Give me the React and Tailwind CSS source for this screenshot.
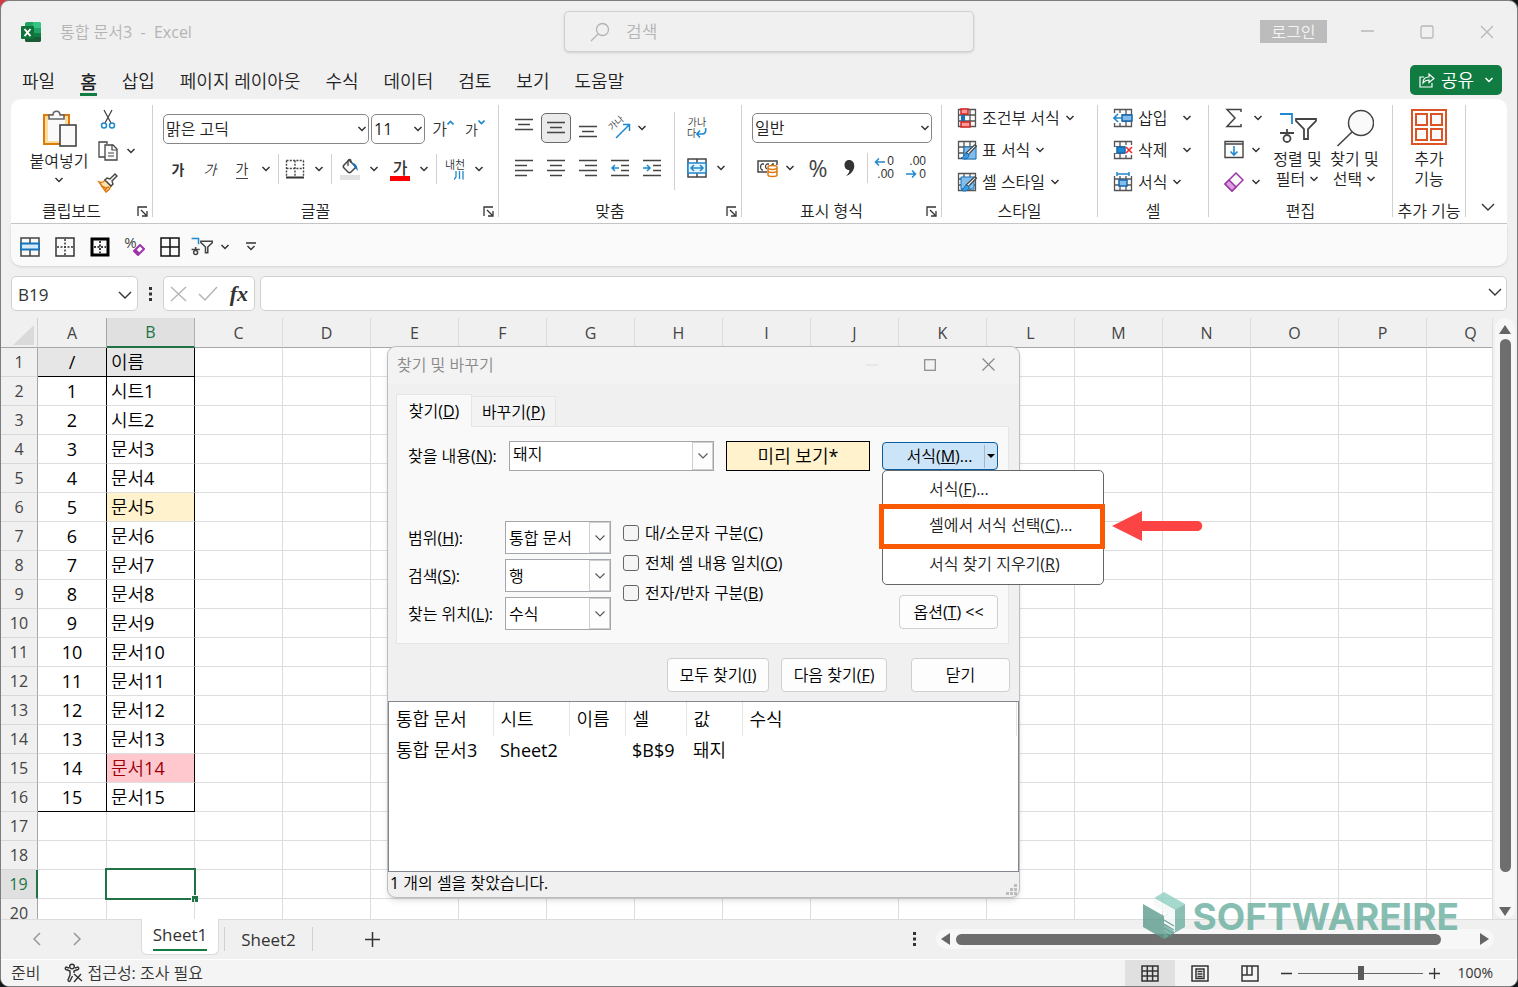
import React from 'react';

const COLS = ['C', 'D', 'E', 'F', 'G', 'H', 'I', 'J', 'K', 'L', 'M', 'N', 'O', 'P', 'Q'];

const NAMES = [
  '이름', '시트1', '시트2', '문서3', '문서4', '문서5', '문서6', '문서7', '문서8',
  '문서9', '문서10', '문서11', '문서12', '문서13', '문서14', '문서15',
];

const MENU_TABS = ['파일', '홈', '삽입', '페이지 레이아웃', '수식', '데이터', '검토', '보기', '도움말'];

/* ---------- 공통 ---------- */

function Svg({ w = 20, h = 20, className = '', children }) {
  return (
    <svg width={w} height={h} viewBox={`0 0 ${w} ${h}`} fill="none" className={`shrink-0 ${className}`} aria-hidden="true">
      {children}
    </svg>
  );
}

function Chevron({ className = 'text-[#333]' }) {
  return (
    <Svg w={10} h={6} className={className}>
      <path d="M1.5 1 5 4.5 8.5 1" stroke="currentColor" strokeWidth="1.5" />
    </Svg>
  );
}

function WideChevron({ className = 'text-[#333]' }) {
  return (
    <Svg w={14} h={8} className={className}>
      <path d="M1 1 7 7 13 1" stroke="currentColor" strokeWidth="1.4" />
    </Svg>
  );
}

function IconButton({ label, className = 'w-8', children }) {
  return (
    <button type="button" aria-label={label} className={`flex h-8 shrink-0 items-center justify-center ${className}`}>
      {children}
    </button>
  );
}

function Divider({ className = 'h-[30px]' }) {
  return <div className={`w-px shrink-0 bg-[#d0d0d0] ${className}`} />;
}

function Group({ title, launcher, className, children }) {
  return (
    <section className={`flex shrink-0 py-[6px] ${className}`}>
      <div className="flex min-w-0 flex-1 flex-col">
        <div className="h-[100px]">{children}</div>
        <div className={`relative flex h-3 items-center justify-center text-[16px] leading-3 whitespace-nowrap ${launcher ? 'pr-5' : ''}`}>
          {title}
          {launcher && (
            <button type="button" aria-label={`${title} 설정`} className="absolute right-1 bottom-0">
              <Svg w={11} h={11}>
                <path d="M1 10V1h9M4 4l5 5M10 5v5H5" stroke="#333" strokeWidth="1.3" />
              </Svg>
            </button>
          )}
        </div>
      </div>
      <Divider className="h-full" />
    </section>
  );
}

function RibbonSelect({ label, value, className }) {
  return (
    <div className={`relative ${className}`}>
      <select aria-label={label} className="h-[30px] w-full appearance-none rounded-[5px] border border-[#868686] bg-white pl-[2px] text-[16px] leading-none text-[#222]">
        <option>{value}</option>
      </select>
      <span className="pointer-events-none absolute top-3 right-[2px]">
        <Chevron />
      </span>
    </div>
  );
}

/* ---------- 아이콘 ---------- */

function ExcelLogo() {
  return (
    <Svg w={22} h={22}>
      <path d="M7 1h7v6H5V2z" fill="#21a366" />
      <path d="M13 1h7l1 1v5h-8z" fill="#33c481" />
      <path d="M5 7h8v5H5z" fill="#107c41" />
      <path d="M13 7h8v5h-8z" fill="#21a366" />
      <path d="M5 12h16v8l-1 1H6l-1-1z" fill="#185c37" />
      <path d="M13 12h8v4h-8z" fill="#107c41" />
      <rect x="1" y="5" width="13" height="13" rx="1" fill="#0f7238" />
      <path d="m4.500 8 6 7.200M10.500 8l-6 7.200" stroke="#fff" strokeWidth="1.9" />
    </Svg>
  );
}

function PasteIcon() {
  return (
    <Svg w={36} h={38}>
      <rect x="3" y="6" width="25" height="29" fill="#fadf9a" stroke="#e07a10" strokeWidth="2" />
      <rect x="7" y="9" width="17" height="23" fill="#fafafa" />
      <path d="M8 10V6h4c0-5 7-5 7 0h4v4z" fill="#fafafa" stroke="#666" strokeWidth="1.600" />
      <rect x="19" y="16" width="16" height="21" fill="#fafafa" stroke="#444" strokeWidth="1.600" />
    </Svg>
  );
}

function CutIcon() {
  return (
    <Svg>
      <path d="M6 1l7 13M14 1 7 14" stroke="#444" strokeWidth="1.300" />
      <circle cx="6" cy="16.500" r="2.500" stroke="#1e88d0" strokeWidth="1.500" />
      <circle cx="14" cy="16.500" r="2.500" stroke="#1e88d0" strokeWidth="1.500" />
    </Svg>
  );
}

function CopyIcon() {
  return (
    <Svg w={22} h={22}>
      <path d="M8 17H2V2h8v2" stroke="#444" strokeWidth="1.300" />
      <path d="M8 5h8l4 4v11H8z" fill="#fafafa" stroke="#444" strokeWidth="1.300" />
      <path d="M15 5v5h5M11 13h6M11 16h6" stroke="#444" strokeWidth="1.200" />
    </Svg>
  );
}

function PainterIcon() {
  return (
    <Svg w={22} h={22}>
      <path d="M2 10c3 1 5 0 6-2l6 6c-1 3-3 5-5 6z" fill="#fbe0b0" stroke="#e07a10" strokeWidth="1.500" />
      <path d="m4 14 5 2 3-1M8 18l3-3" stroke="#e07a10" strokeWidth="1.500" />
      <path d="m8 8 2-2 3 1 5-5 2 2-5 5 1 3-2 2z" fill="#fafafa" stroke="#444" strokeWidth="1.400" />
    </Svg>
  );
}

function LinesIcon({ lines }) {
  return (
    <Svg>
      {lines.map(([x1, x2, y]) => (
        <path key={y} d={`M${x1} ${y}.5H${x2}`} stroke="#444" strokeWidth="1.400" />
      ))}
    </Svg>
  );
}

function IndentIcon({ right }) {
  return (
    <Svg>
      <path d="M1 2.500h18M11 7.500h8M11 12.500h8M1 17.500h18" stroke="#444" strokeWidth="1.400" />
      {right
        ? <path d="M1 10h7M5 7l3 3-3 3" stroke="#1e88d0" strokeWidth="1.500" />
        : <path d="M9 10H2M5 7l-3 3 3 3" stroke="#1e88d0" strokeWidth="1.500" />}
    </Svg>
  );
}

function BorderIcon() {
  return (
    <Svg>
      <path d="M1.500 1.500h17M1.500 1.500v16M18.500 1.500v16M10 1.500v16M1.500 9.500h17" stroke="#444" strokeWidth="1.400" strokeDasharray="2 1.300" />
      <path d="M1 18.500h18" stroke="#333" strokeWidth="2" />
    </Svg>
  );
}

function FillIcon() {
  return (
    <Svg w={20} h={22}>
      <rect x="0" y="17" width="20" height="5" fill="#e3e3e3" />
      <path d="m9 2 7 7-5 5c-1 1-2 1-3 0l-4-4c-1-1-1-2 0-3z" fill="#fafafa" stroke="#444" strokeWidth="1.500" />
      <path d="M8 8V3c0-2 3-2 3 0v2" stroke="#444" strokeWidth="1.300" />
      <path d="M12 5c4 0 5 3 6 8l-3-3z" fill="#1673bb" />
    </Svg>
  );
}

function OrientationIcon() {
  return (
    <Svg w={24} h={24} className="overflow-visible">
      <text x="0" y="0" fontSize="9" fontWeight="500" fill="#333" transform="translate(4 15) rotate(-42)">가나</text>
      <path d="M8 22 21 9M15 8.500h6.500V15" stroke="#1e88d0" strokeWidth="1.500" />
    </Svg>
  );
}

function MergeIcon() {
  return (
    <Svg>
      <path d="M1 1h18v18H1zM10 1v18" stroke="#444" strokeWidth="1.500" />
      <rect x="1" y="5" width="18" height="10" fill="#eaf4fc" stroke="#1e88d0" strokeWidth="1.500" />
      <path d="M4 10h12M7 7l-3 3 3 3M13 7l3 3-3 3" stroke="#1e88d0" strokeWidth="1.500" />
    </Svg>
  );
}

function CurrencyIcon() {
  return (
    <Svg w={22}>
      <path d="M10 14H1V3h19v4" stroke="#444" strokeWidth="1.500" />
      <path d="M7 6H5c-2 1-2 5 0 6h1M12 6h-2c-2 1-2 4 0 5M15 6h2M15 6v3" stroke="#444" strokeWidth="1.300" />
      <path d="M11 9c0-2 9-2 9 0v8c0 2-9 2-9 0zM11 10c1 2 8 2 9 0M11 13c1 2 8 2 9 0" fill="#fff" stroke="#e07a10" strokeWidth="1.500" />
    </Svg>
  );
}

function DecimalIcon({ grow }) {
  return (
    <span className="relative flex w-5 flex-col text-right text-[12px] leading-[13px] text-[#333] [font-family:'Liberation_Sans',sans-serif]">
      <span>{grow ? '0' : '.00'}</span>
      <span>{grow ? '.00' : '0'}</span>
      <Svg w={11} h={8} className={grow ? 'absolute top-[3px] left-0' : 'absolute bottom-[3px] left-0'}>
        {grow
          ? <path d="M11 4H1.500M5 .5 1.500 4 5 7.500" stroke="#1e88d0" strokeWidth="1.500" />
          : <path d="M0 4h9.500M6 .5 9.500 4 6 7.500" stroke="#1e88d0" strokeWidth="1.500" />}
      </Svg>
    </span>
  );
}

function GridBase({ children }) {
  return (
    <Svg>
      <rect x="1" y="1" width="18" height="18" fill="#fafafa" />
      <path d="M1.500 1.500h17v17h-17zM1.500 7h17M1.500 13h17M7 1.500v17M13 1.500v17" stroke="#555" strokeWidth="1.300" />
      {children}
    </Svg>
  );
}

function Brush() {
  return (
    <>
      <path d="M19.500 6 11 15l-2-2 8.500-8z" fill="#f4f4f4" stroke="#444" strokeWidth="1.200" />
      <path d="M10 13c-3 0-2 4-6 5 3 2 8 1 8-3z" fill="#3f9be0" stroke="#1467ae" strokeWidth="1" />
    </>
  );
}

const STYLE_ICONS = {
  cond: (
    <GridBase>
      <path d="M4 1h7v5H4zM4 14h9v5H4z" fill="#ff9a9a" stroke="#d32626" strokeWidth="1.500" />
      <path d="M4 7h4v6H4z" fill="#1673bb" />
    </GridBase>
  ),
  table: <GridBase><path d="M7 7h12v12H7z" fill="#83bdec" stroke="#1673bb" /><Brush /></GridBase>,
  cell: <GridBase><path d="M4 5h13v12H4z" fill="#83bdec" stroke="#1673bb" /><Brush /></GridBase>,
  insert: (
    <GridBase>
      <path d="M0 5h9v10H0z" fill="#fff" />
      <path d="M9 7h10v6H9z" fill="#83bdec" stroke="#1467ae" strokeWidth="1.500" />
      <path d="M9 10H1M5 6l-4 4 4 4" stroke="#1e88d0" strokeWidth="1.600" />
    </GridBase>
  ),
  remove: (
    <GridBase>
      <path d="M12 5h8v10h-8zM0 7h4v6H0z" fill="#fff" />
      <path d="M4 7h8v6H4z" fill="#1e88d0" stroke="#1467ae" strokeWidth="1.500" />
      <path d="m13 7 6 6M19 7l-6 6" stroke="#ee2c2c" strokeWidth="1.600" />
    </GridBase>
  ),
  format: (
    <GridBase>
      <path d="M0 0h20v4H0z" fill="#fff" />
      <path d="M6 8h8v6H6z" fill="#83bdec" stroke="#1467ae" strokeWidth="1.500" />
      <path d="M4 2h12M4 0v4M16 0v4" stroke="#1e88d0" strokeWidth="1.500" />
    </GridBase>
  ),
};

function SortFilterIcon({ small }) {
  return (
    <svg width={small ? 22 : 38} height={small ? 19 : 32} viewBox="0 0 38 32" fill="none" className="shrink-0" aria-hidden="true">
      <g strokeWidth={small ? 2.6 : 1.8}>
        <path d="M1 2h12v10" stroke="#1e88d0" />
        <path d="M8 17v3M1 21h14" stroke="#444" />
        <circle cx="8" cy="26.500" r="3.500" stroke="#444" />
        <path d="M17 7h20v2l-8 8v10h-4V17l-8-8z" stroke="#444" />
      </g>
    </svg>
  );
}

function EraserIcon() {
  return (
    <Svg w={20} h={20}>
      <path d="m12 1 7 7L8 19l-7-7z" fill="#fafafa" stroke="#9b35a6" strokeWidth="1.500" />
      <path d="m5 8 7 7-4 4-7-7z" fill="#dca0e0" stroke="#9b35a6" strokeWidth="1.500" />
    </Svg>
  );
}

/* ---------- 리본 ---------- */

function TextButton({ icon, children, chevronClass = '' }) {
  return (
    <button type="button" className="flex h-8 items-center gap-[5px] whitespace-nowrap text-[16px]">
      {STYLE_ICONS[icon]}
      <span>{children}</span>
      <span className={chevronClass}><Chevron /></span>
    </button>
  );
}

function Ribbon() {
  return (
    <div className="flex h-[125px] shrink-0 overflow-hidden rounded-t-[10px] border-b border-[#c8c8c8] bg-white">
      <Group title="클립보드" launcher className="w-[142px]">
        <div className="flex pl-4">
          <button type="button" className="flex w-[64px] flex-col items-center pt-1">
            <PasteIcon />
            <span className="mt-1 text-[16px] leading-5 whitespace-nowrap">붙여넣기</span>
            <span className="mt-[6px]"><Chevron /></span>
          </button>
          <div className="-mt-[2px] ml-px flex flex-col">
            <IconButton label="잘라내기"><CutIcon /></IconButton>
            <IconButton label="복사"><CopyIcon /></IconButton>
            <IconButton label="서식 복사"><PainterIcon /></IconButton>
          </div>
          <div className="pt-[30px]">
            <IconButton label="복사 옵션" className="w-[14px]"><Chevron /></IconButton>
          </div>
        </div>
      </Group>

      <Group title="글꼴" launcher className="w-[346px]">
        <div className="flex items-center pt-2 pl-[10px]">
          <RibbonSelect label="글꼴 이름" value="맑은 고딕" className="w-[206px]" />
          <RibbonSelect label="글꼴 크기" value="11" className="ml-[2px] w-[54px]" />
          <IconButton label="글꼴 크기 크게" className="ml-[2px] w-8">
            <span className="text-[16px] text-[#333]">가</span>
            <Svg w={7} h={5} className="mb-[14px]"><path d="M.5 4.500l3-3 3 3" stroke="#1e88d0" strokeWidth="1.600" /></Svg>
          </IconButton>
          <IconButton label="글꼴 크기 작게" className="w-8">
            <span className="text-[14px] text-[#333]">가</span>
            <Svg w={7} h={5} className="mb-[14px]"><path d="M.5.5l3 3 3-3" stroke="#1e88d0" strokeWidth="1.600" /></Svg>
          </IconButton>
        </div>
        <div className="flex items-center pt-2 pl-[9px] text-[14px] text-[#333]">
          <IconButton label="굵게"><b className="font-bold [font-family:'Noto_Sans_CJK_KR',sans-serif]">가</b></IconButton>
          <IconButton label="기울임꼴"><i>가</i></IconButton>
          <IconButton label="밑줄"><span className="border-b border-[#444] leading-[18px]">가</span></IconButton>
          <IconButton label="밑줄 옵션" className="w-4"><Chevron /></IconButton>
          <Divider className="ml-1 h-[30px]" />
          <IconButton label="테두리"><BorderIcon /></IconButton>
          <IconButton label="테두리 옵션" className="w-4"><Chevron /></IconButton>
          <Divider className="mr-[2px] ml-1 h-[30px]" />
          <IconButton label="채우기 색"><FillIcon /></IconButton>
          <IconButton label="채우기 색 옵션" className="w-4"><Chevron /></IconButton>
          <IconButton label="글꼴 색" className="w-9">
            <span className="flex w-5 flex-col items-center border-b-[5px] border-[#f00] text-[16px] leading-[18px] font-medium [font-family:'Noto_Sans_CJK_KR',sans-serif]">가</span>
          </IconButton>
          <IconButton label="글꼴 색 옵션" className="w-3"><Chevron /></IconButton>
          <Divider className="ml-[6px] h-[30px]" />
          <IconButton label="윗주 필드 표시" className="w-9 flex-col">
            <span className="text-[11px] leading-[12px] whitespace-nowrap">내천</span>
            <Svg w={10} h={9} className="ml-2"><path d="M2 0v6L0 8.500M5.500 0v8M9 0v8.500" stroke="#1e88d0" strokeWidth="1.300" /></Svg>
          </IconButton>
          <IconButton label="윗주 옵션" className="w-3"><Chevron /></IconButton>
        </div>
      </Group>

      <Group title="맞춤" launcher className="w-[243px]">
        <div className="flex pl-[9px]">
          <div className="w-[166px]">
            <div className="flex items-center pt-[7px]">
              <IconButton label="위쪽 맞춤"><LinesIcon lines={[[1, 19, 1], [4, 16, 6], [1, 19, 11]]} /></IconButton>
              <IconButton label="가운데 맞춤">
                <span className="flex h-[30px] w-[30px] items-center justify-center rounded-[5px] border border-[#6b6b6b] bg-[#ebebeb]">
                  <LinesIcon lines={[[1, 19, 4], [4, 16, 9], [1, 19, 14]]} />
                </span>
              </IconButton>
              <IconButton label="아래쪽 맞춤"><LinesIcon lines={[[1, 19, 8], [4, 16, 13], [1, 19, 18]]} /></IconButton>
              <IconButton label="방향"><OrientationIcon /></IconButton>
              <IconButton label="방향 옵션" className="w-3"><Chevron /></IconButton>
            </div>
            <div className="flex items-center pt-2">
              <IconButton label="왼쪽 맞춤"><LinesIcon lines={[[1, 19, 2], [1, 13, 7], [1, 19, 12], [1, 13, 17]]} /></IconButton>
              <IconButton label="가로 가운데"><LinesIcon lines={[[1, 19, 2], [4, 16, 7], [1, 19, 12], [4, 16, 17]]} /></IconButton>
              <IconButton label="오른쪽 맞춤"><LinesIcon lines={[[1, 19, 2], [7, 19, 7], [1, 19, 12], [7, 19, 17]]} /></IconButton>
              <IconButton label="내어쓰기"><IndentIcon /></IconButton>
              <IconButton label="들여쓰기"><IndentIcon right /></IconButton>
            </div>
          </div>
          <Divider className="mt-[7px] h-[78px]" />
          <div className="pl-[6px]">
            <div className="pt-[7px]">
              <IconButton label="텍스트 줄 바꿈" className="w-8 flex-col text-[10px] leading-[11px] text-[#333]">
                <span>가나</span>
                <span className="flex">
                  다
                  <Svg w={11} h={11}><path d="M9.500 0c1 4-1 6-3 6H1M4 2.500.8 6 4 9.500" stroke="#1e88d0" strokeWidth="1.600" /></Svg>
                </span>
              </IconButton>
            </div>
            <div className="flex pt-2">
              <IconButton label="병합하고 가운데 맞춤"><MergeIcon /></IconButton>
              <IconButton label="병합 옵션" className="w-4"><Chevron /></IconButton>
            </div>
          </div>
        </div>
      </Group>

      <Group title="표시 형식" launcher className="w-[200px]">
        <div className="pt-2 pl-[10px]">
          <RibbonSelect label="표시 형식" value="일반" className="w-[180px]" />
        </div>
        <div className="flex items-center pt-[9px] pl-[10px]">
          <IconButton label="회계 표시 형식"><CurrencyIcon /></IconButton>
          <IconButton label="회계 옵션" className="w-3"><Chevron /></IconButton>
          <IconButton label="백분율" className="w-11 text-[23px] leading-none text-[#444]">%</IconButton>
          <IconButton label="쉼표" className="w-5">
            <Svg w={12} h={20}><path d="M5 2c7 0 8 12-3 16 3-3 4-5 3-6C-1 12-1 2 5 2z" fill="#333" /></Svg>
          </IconButton>
          <Divider className="ml-[7px] h-[30px]" />
          <IconButton label="자릿수 늘림"><DecimalIcon grow /></IconButton>
          <IconButton label="자릿수 줄임"><DecimalIcon /></IconButton>
        </div>
      </Group>

      <Group title="스타일" className="w-[156px]">
        <div className="-mt-[3px] pl-[15px]">
          <TextButton icon="cond">조건부 서식</TextButton>
          <TextButton icon="table">표 서식</TextButton>
          <TextButton icon="cell">셀 스타일</TextButton>
        </div>
      </Group>

      <Group title="셀" className="w-[111px]">
        <div className="-mt-[3px] pl-[15px]">
          <TextButton icon="insert" chevronClass="ml-[10px]">삽입</TextButton>
          <TextButton icon="remove" chevronClass="ml-[10px]">삭제</TextButton>
          <TextButton icon="format">서식</TextButton>
        </div>
      </Group>

      <Group title="편집" className="w-[184px]">
        <div className="flex pl-[15px]">
          <div className="-mt-[3px]">
            <div className="flex">
              <IconButton label="합계" className="w-5"><Svg><path d="M17 4V1.500H3L11 10l-8 8.500h14V16" stroke="#444" strokeWidth="1.500" /></Svg></IconButton>
              <IconButton label="합계 옵션" className="ml-2 w-3"><Chevron /></IconButton>
            </div>
            <div className="flex">
              <IconButton label="채우기" className="w-5">
                <Svg><path d="M1 1.500h18v16H1zM1 4h18" stroke="#444" strokeWidth="1.400" /><path d="M10 6v9M6.500 11.500 10 15l3.500-3.500" stroke="#1e88d0" strokeWidth="1.600" /></Svg>
              </IconButton>
              <IconButton label="채우기 옵션" className="ml-[6px] w-3"><Chevron /></IconButton>
            </div>
            <div className="flex">
              <IconButton label="지우기" className="w-5"><EraserIcon /></IconButton>
              <IconButton label="지우기 옵션" className="ml-[6px] w-3"><Chevron /></IconButton>
            </div>
          </div>
          <button type="button" className="ml-[5px] flex w-[57px] flex-col items-center pt-[7px] text-[16px] leading-5">
            <SortFilterIcon />
            <span className="mt-[5px] whitespace-nowrap">정렬 및</span>
            <span className="flex items-center gap-1 whitespace-nowrap">필터 <Chevron /></span>
          </button>
          <button type="button" className="flex w-[57px] flex-col items-center pt-1 text-[16px] leading-5">
            <Svg w={38} h={38}>
              <circle cx="25" cy="14" r="12.500" fill="#fafafa" stroke="#444" strokeWidth="1.500" />
              <path d="M16 23 1.500 37" stroke="#444" strokeWidth="1.600" />
            </Svg>
            <span className="mt-[2px] whitespace-nowrap">찾기 및</span>
            <span className="flex items-center gap-1 whitespace-nowrap">선택 <Chevron /></span>
          </button>
        </div>
      </Group>

      <Group title="추가 기능" className="w-[73px]">
        <button type="button" className="flex w-full flex-col items-center pt-1 text-[16px] leading-5">
          <Svg w={36} h={36}>
            <rect x="1" y="1" width="34" height="34" fill="#fff" stroke="#dc5426" strokeWidth="2" />
            <path d="M5 5h11v11H5zM20 5h11v11H20zM5 20h11v11H5zM20 20h11v11H20z" fill="#fafafa" stroke="#dc5426" strokeWidth="2" />
          </Svg>
          <span className="mt-1">추가</span>
          <span>기능</span>
        </button>
      </Group>

      <div className="flex flex-1 items-end justify-end pr-3 pb-[12px]">
        <button type="button" aria-label="리본 축소"><WideChevron /></button>
      </div>
    </div>
  );
}

function QuickAccess() {
  return (
    <div className="flex h-[42px] shrink-0 items-center rounded-b-[10px] bg-[#fafafa] pt-[3px] pl-px shadow-sm">
      <IconButton label="셀 병합" className="w-[35px]">
        <Svg><path d="M1 1h18v18H1zM10 1v18" stroke="#444" strokeWidth="1.500" /><path d="M1 6.500h18v6H1z" fill="#d6ebfa" stroke="#1673bb" strokeWidth="1.800" /></Svg>
      </IconButton>
      <IconButton label="점선 테두리" className="w-[35px]">
        <Svg><path d="M1 1h18v18H1z" stroke="#333" strokeWidth="1.500" /><path d="M10 2v16M2 10h16" stroke="#333" strokeWidth="1.500" strokeDasharray="2 1.500" /></Svg>
      </IconButton>
      <IconButton label="굵은 바깥쪽 테두리" className="w-[35px]">
        <Svg><path d="M2 2h16v16H2z" stroke="#000" strokeWidth="3" /><path d="M10 4v12M4 10h12" stroke="#000" strokeWidth="1.500" strokeDasharray="2 1.500" /></Svg>
      </IconButton>
      <IconButton label="서식 지우기" className="w-[35px]">
        <span className="flex text-[15px] leading-none text-[#444]">
          <span className="mb-2">%</span>
          <Svg w={12} h={12} className="-ml-[4px] mt-[9px]">
            <path d="m7 1 4 4-6 6-4-4z" stroke="#9b35a6" strokeWidth="2" fill="#fff" />
            <path d="m3 5 4 4-2 2-4-4z" fill="#9b35a6" />
          </Svg>
        </span>
      </IconButton>
      <IconButton label="모든 테두리" className="w-[35px]">
        <Svg><path d="M1 1h18v18H1zM10 1v18M1 10h18" stroke="#111" strokeWidth="1.500" /></Svg>
      </IconButton>
      <IconButton label="정렬 및 필터" className="w-[30px]"><SortFilterIcon small /></IconButton>
      <IconButton label="정렬 옵션" className="w-4"><Chevron /></IconButton>
      <IconButton label="빠른 실행 도구 모음 사용자 지정" className="ml-1 w-7">
        <Svg w={10} h={9}><path d="M0 1h10M1.500 4 5 7.500 8.500 4" stroke="#333" strokeWidth="1.400" /></Svg>
      </IconButton>
    </div>
  );
}

function FormulaBar() {
  return (
    <div className="mx-[10px] mt-[10px] mb-[7px] flex h-[35px] shrink-0 items-center">
      <div className="flex h-full w-[127px] items-center rounded-[5px] border border-[#d0d0d0] bg-white pt-[2px] pr-[5px] pl-[6px]">
        <input aria-label="이름 상자" defaultValue="B19" className="w-0 flex-1 bg-transparent text-[17px] text-[#333] outline-none" />
        <WideChevron />
      </div>
      <Svg w={3} h={14} className="mx-[11px]">
        <path d="M0 0h3v3H0zM0 5.500h3v3H0zM0 11h3v3H0z" fill="#333" />
      </Svg>
      <div className="flex h-full w-[92px] items-center justify-between rounded-[5px] border border-[#d0d0d0] bg-white px-[6px]">
        <button type="button" aria-label="취소"><Svg w={17} h={16}><path d="m1 1 15 14M16 1 1 15" stroke="#b5b5b5" strokeWidth="1.400" /></Svg></button>
        <button type="button" aria-label="입력"><Svg w={20} h={16}><path d="m1 8 6 6L19 1" stroke="#b5b5b5" strokeWidth="1.500" /></Svg></button>
        <button type="button" aria-label="함수 삽입" className="[font-family:'Liberation_Serif',serif] text-[22px] leading-none font-bold text-[#333] italic">fx</button>
      </div>
      <div className="ml-[5px] flex h-full flex-1 items-center rounded-[5px] border border-[#d0d0d0] bg-white pr-1">
        <input aria-label="수식 입력줄" className="min-w-0 flex-1 bg-transparent px-2 outline-none" />
        <WideChevron className="mb-1 text-[#333]" />
      </div>
    </div>
  );
}

/* ---------- 시트 ---------- */

function SheetRow({ n }) {
  const name = NAMES[n - 1];
  const filled = n <= NAMES.length;
  const active = n === 19;

  // 표 범위의 테두리만 검정색
  const right = filled ? 'border-r-black' : 'border-r-[#dedede]';
  const bottom = n === 1 || n === NAMES.length ? 'border-b-black' : 'border-b-[#dedede]';

  let fill = '';
  if (n === 1) fill = 'bg-[#e6e6e6]';
  if (n === 6) fill = 'bg-[#fff2cc]';
  if (n === 15) fill = 'bg-[#ffc7ce] text-[#9c0006]';

  return (
    <tr className="h-[29px]">
      <th scope="row" className={`border-b border-b-[#d8d8d8] p-0 text-center text-[16px] leading-6 font-normal ${active ? 'border-r-2 border-r-[#217346] bg-[#e0e0e0] text-[#217346]' : 'border-r border-r-[#a6a6a6] bg-[#f0f0f0] text-[#444]'}`}>
        {n}
      </th>
      <td className={`border-r border-b p-0 text-center ${n === 1 ? 'bg-[#e6e6e6]' : ''} ${right} ${bottom}`}>
        {n === 1 ? '/' : filled ? n - 1 : ''}
      </td>
      <td className={`relative border-r border-b p-0 pl-1 ${fill} ${right} ${bottom}`}>
        {name}
        {active && (
          <span className="absolute -inset-[2px] border-2 border-[#217346]">
            <span className="absolute -right-1 -bottom-1 h-[7px] w-[7px] border-t border-l border-white bg-[#217346]" />
          </span>
        )}
      </td>
      {COLS.map((c) => <td key={c} className="border-r border-b border-[#dedede] p-0" />)}
    </tr>
  );
}

function Sheet() {
  const rows = Array.from({ length: 20 }, (_, i) => i + 1);
  return (
    <div className="flex min-h-0 flex-1">
      <div className="min-w-0 flex-1 overflow-hidden border-r border-[#dedede] bg-white">
        <table className="w-[1514px] table-fixed border-separate border-spacing-0 text-[18px] leading-6 text-black">
          <colgroup>
            <col className="w-[37px]" />
            <col className="w-[69px]" />
            <col className="w-[88px]" />
            {COLS.map((c) => <col key={c} className="w-[88px]" />)}
          </colgroup>
          <thead>
            <tr className="h-[30px] bg-[#f0f0f0] text-[16px] text-[#444]">
              <th className="border-r border-b border-r-[#d0d0d0] border-b-[#a6a6a6] p-0">
                <Svg w={21} h={20} className="mt-1 ml-3"><path d="M21 0v20H0z" fill="#dadada" /></Svg>
              </th>
              <th className="border-r border-b border-r-[#a6a6a6] border-b-[#a6a6a6] p-0 font-normal">A</th>
              <th className="border-r border-b-2 border-r-[#b0b0b0] border-b-[#217346] bg-[#e0e0e0] p-0 font-normal text-[#217346]">B</th>
              {COLS.map((c) => (
                <th key={c} className="border-r border-b border-r-[#dedede] border-b-[#a6a6a6] p-0 font-normal">{c}</th>
              ))}
            </tr>
          </thead>
          <tbody>
            {rows.map((n) => <SheetRow key={n} n={n} />)}
          </tbody>
        </table>
      </div>
      <div className="mr-[2px] ml-[2px] flex w-5 flex-col items-center rounded-full bg-[#f7f7f7] pt-[7px] pb-[3px]">
        <Svg w={12} h={9}><path d="M6 0 12 9H0z" fill="#666" /></Svg>
        <div className="mt-[5px] w-[11px] flex-1 rounded-full bg-[#6e6e6e]" />
        <Svg w={12} h={9} className="mt-[35px]"><path d="M6 9 12 0H0z" fill="#666" /></Svg>
      </div>
    </div>
  );
}

function SheetTabs() {
  return (
    <div className="flex h-10 shrink-0 items-start border-t border-[#dcdcdc] text-[17px] leading-6 text-[#333]">
      <div className="flex h-[38px] w-[140px] items-center gap-8 pl-[31px]">
        <button type="button" aria-label="이전 시트"><Svg w={9} h={14}><path d="M8 1 2 7l6 6" stroke="#999" strokeWidth="1.500" /></Svg></button>
        <button type="button" aria-label="다음 시트"><Svg w={9} h={14}><path d="m1 1 6 6-6 6" stroke="#999" strokeWidth="1.500" /></Svg></button>
      </div>
      <button type="button" className="-mt-px flex h-9 w-[78px] justify-center rounded-b-[6px] border border-t-0 border-[#dcdcdc] bg-white pt-1">
        <span className="h-7 border-b-2 border-[#107c41]">Sheet1</span>
      </button>
      <div className="ml-[5px] flex h-[38px] items-center">
        <Divider className="h-6" />
        <button type="button" className="w-[87px] pt-[2px]">Sheet2</button>
        <Divider className="h-6" />
        <button type="button" aria-label="새 시트" className="ml-[52px]">
          <Svg w={15} h={15}><path d="M7.500 0v15M0 7.500h15" stroke="#333" strokeWidth="1.500" /></Svg>
        </button>
      </div>
      <div className="flex h-[38px] flex-1 items-center justify-end">
        <Svg w={3} h={14} className="mr-[20px]">
          <path d="M0 0h3v3H0zM0 5.500h3v3H0zM0 11h3v3H0z" fill="#333" />
        </Svg>
        <div className="mr-[23px] flex h-5 w-[558px] items-center rounded-full bg-[#f7f7f7] px-[5px]">
          <Svg w={9} h={12}><path d="M9 0v12L0 6z" fill="#666" /></Svg>
          <div className="ml-[6px] h-[11px] flex-1 rounded-full bg-[#6e6e6e]" />
          <Svg w={9} h={12} className="ml-[39px]"><path d="M0 0v12l9-6z" fill="#666" /></Svg>
        </div>
      </div>
    </div>
  );
}

function StatusBar() {
  return (
    <div className="flex h-[27px] shrink-0 items-center border-t border-white bg-[#f4f4f4] text-[16px] leading-6 text-[#333]">
      <span className="pl-[10px]">준비</span>
      <button type="button" className="ml-6 flex items-center gap-1">
        <Svg w={19} h={20}>
          <circle cx="8" cy="3.500" r="2.300" stroke="#333" strokeWidth="1.400" />
          <path d="M5 5 2 4c-1 1-1 2 0 2.500L6 8v4l-2 5c0 1 1 2 2 1l2.500-5M11 5l3-1c1 1 1 2 0 2.500L10 8v2" stroke="#333" strokeWidth="1.400" />
          <path d="m10 11 8 7M17 11l-7 8" stroke="#333" strokeWidth="1.400" />
        </Svg>
        접근성: 조사 필요
      </button>
      <div className="ml-auto flex h-full items-center">
        <IconButton label="기본" className="max-h-full w-[50px] bg-[#e0e0e0]">
          <Svg w={18} h={17}><path d="M1 1h16v15H1zM1 6h16M1 11h16M6.300 1v15M11.600 1v15" stroke="#333" strokeWidth="1.500" /></Svg>
        </IconButton>
        <IconButton label="페이지 레이아웃" className="max-h-full w-[50px]">
          <Svg w={18} h={17}><path d="M1 1h16v15H1zM5 4h8v9.500H5zM6.500 6.500h5M6.500 9h5M6.500 11.500h5" stroke="#333" strokeWidth="1.500" /></Svg>
        </IconButton>
        <IconButton label="페이지 나누기 미리 보기" className="max-h-full w-[50px]">
          <Svg w={18} h={17}><path d="M1 1h16v15H1zM1 10h10V1M6 1v9" stroke="#333" strokeWidth="1.500" /></Svg>
        </IconButton>
        <button type="button" aria-label="축소" className="ml-[6px]"><Svg w={11} h={11}><path d="M0 5.500h11" stroke="#333" strokeWidth="1.300" /></Svg></button>
        <input
          type="range"
          aria-label="확대/축소"
          defaultValue="50"
          className="mx-[6px] h-4 w-[125px] appearance-none bg-[linear-gradient(#666,#666)] bg-[length:100%_1px] bg-center bg-no-repeat [&::-webkit-slider-thumb]:h-[14px] [&::-webkit-slider-thumb]:w-[6px] [&::-webkit-slider-thumb]:appearance-none [&::-webkit-slider-thumb]:bg-[#5a5a5a]"
        />
        <button type="button" aria-label="확대"><Svg w={11} h={11}><path d="M0 5.500h11M5.500 0v11" stroke="#333" strokeWidth="1.300" /></Svg></button>
        <span className="w-[77px] pr-6 text-right text-[14px]">100%</span>
      </div>
    </div>
  );
}

/* ---------- 찾기 및 바꾸기 ---------- */

function Key({ k, tail = '' }) {
  return <>(<u>{k}</u>){tail}</>;
}

function Combo({ id, value, className, selectClass }) {
  return (
    <div className={`relative ${className}`}>
      <select id={id} className={`w-full appearance-none border border-[#a3a6aa] bg-white pl-[3px] ${selectClass}`}>
        <option>{value}</option>
      </select>
      <span className="pointer-events-none absolute inset-y-px right-px flex w-[21px] items-center justify-center border border-[#cfcfcf] bg-[#fdfdfd]">
        <Svg w={10} h={6}><path d="m.5.500 4.500 4.500L9.500.5" stroke="#555" strokeWidth="1.100" /></Svg>
      </span>
    </div>
  );
}

function DialogButton({ className, children }) {
  return (
    <button type="button" className={`h-[34px] rounded-[4px] border border-[#cfcfcf] bg-[#fdfdfd] whitespace-nowrap ${className}`}>
      {children}
    </button>
  );
}

function FormatMenu() {
  return (
    <div className="absolute top-full left-0 z-10 h-[115px] w-[222px] rounded-[5px] border border-[#666] bg-white text-[#222]">
      <button type="button" className="flex h-9 w-full items-center pl-[46px]">서식<Key k="F" tail="..." /></button>
      <button type="button" className="flex h-9 w-full items-center pl-[46px]">셀에서 서식 선택<Key k="C" tail="..." /></button>
      <button type="button" className="flex h-[41px] w-full items-center pl-[46px]">서식 찾기 지우기<Key k="R" /></button>
      <div className="absolute -right-[2px] -left-[4px] top-[33px] h-[45px] border-[5px] border-[#fb5a04]" />
      <Svg w={91} h={30} className="absolute top-[40px] left-[229px]">
        <path d="M0 15 30 0v10h55c7 0 7 10 0 10H30v10z" fill="#fc4444" />
      </Svg>
    </div>
  );
}

function FindDialog() {
  const selects = [
    ['scope', '범위', 'H', '통합 문서'],
    ['order', '검색', 'S', '행'],
    ['lookin', '찾는 위치', 'L', '수식'],
  ];
  const checks = [
    ['case', '대/소문자 구분', 'C'],
    ['whole', '전체 셀 내용 일치', 'O'],
    ['width', '전자/반자 구분', 'B'],
  ];

  return (
    <div role="dialog" aria-label="찾기 및 바꾸기" className="absolute top-[345px] left-[386px] w-[633px] rounded-[9px] border border-[#bdbdbd] bg-[#f0f0f0] text-[16px] leading-5 text-black shadow-md">
      <div className="flex h-[37px] items-center rounded-t-[9px] bg-[#f3f3f3] pb-[2px] pl-[9px] text-[#8a8a8a]">
        <span className="flex-1">찾기 및 바꾸기</span>
        <Svg w={12} h={12} className="mr-[46px]"><path d="M0 6h12" stroke="#dcdcdc" /></Svg>
        <button type="button" aria-label="최대화" className="mr-[46px]"><Svg w={12} h={12}><rect x=".7" y=".7" width="10.600" height="10.600" stroke="#888" strokeWidth="1.200" /></Svg></button>
        <button type="button" aria-label="창 닫기" className="mr-6"><Svg w={13} h={13}><path d="m.5.500 12 12M12.500.500l-12 12" stroke="#888" strokeWidth="1.200" /></Svg></button>
      </div>

      <div className="px-2 pt-[10px]">
        <div role="tablist" className="flex items-end">
          <button type="button" role="tab" aria-selected="true" className="-mb-px h-[33px] w-[76px] border border-b-0 border-[#e5e5e5] bg-[#f9f9f9]">찾기<Key k="D" /></button>
          <button type="button" role="tab" aria-selected="false" className="h-[30px] w-[84px] border border-b-0 border-l-0 border-[#e5e5e5] bg-[#f3f3f3]">바꾸기<Key k="P" /></button>
        </div>

        <div className="mr-[2px] h-[218px] border border-[#e5e5e5] bg-[#f9f9f9] pt-[14px] pl-[11px]">
          <div className="flex items-center">
            <label htmlFor="find-what" className="w-[101px] whitespace-nowrap">찾을 내용<Key k="N" tail=":" /></label>
            <Combo id="find-what" value="돼지" className="w-[205px]" selectClass="h-[30px] pb-1" />
            <div className="ml-3 flex h-[30px] w-[144px] items-center justify-center border border-black bg-[#fff2cc] text-[18px]">미리 보기*</div>
            <div className="relative ml-3">
              <button type="button" className="flex h-7 w-[116px] items-center rounded-[4px] border border-[#0a5ba0] bg-[#cce4f7]">
                <span className="flex-1 pl-3 text-center">서식<Key k="M" tail="..." /></span>
                <span className="flex h-[23px] w-[13px] items-center justify-center border-l border-[#a9b5bf]">
                  <Svg w={8} h={4}><path d="M0 0h8L4 4z" fill="#000" /></Svg>
                </span>
              </button>
              <FormatMenu />
            </div>
          </div>

          <div className="mt-[50px] flex">
            <div className="flex flex-col gap-[5px]">
              {selects.map(([id, text, k, value]) => (
                <div key={id} className="flex items-center">
                  <label htmlFor={id} className="w-[97px] whitespace-nowrap">{text}<Key k={k} tail=":" /></label>
                  <Combo id={id} value={value} className="w-[106px]" selectClass="h-[33px]" />
                </div>
              ))}
            </div>
            <div className="ml-3 flex w-[200px] flex-col gap-[10px] pt-[2px]">
              {checks.map(([id, text, k]) => (
                <label key={id} className="flex items-center gap-[6px] whitespace-nowrap">
                  <input type="checkbox" className="h-4 w-4 appearance-none rounded-[3px] border border-[#666] bg-[#f5f5f5]" />
                  <span>{text}<Key k={k} /></span>
                </label>
              ))}
            </div>
            <DialogButton className="mt-[74px] ml-[76px] w-[99px]">옵션<Key k="T" /> &lt;&lt;</DialogButton>
          </div>
        </div>

        <div className="flex justify-end pt-[14px] pr-px pb-[9px]">
          <DialogButton className="w-[102px]">모두 찾기<Key k="I" /></DialogButton>
          <DialogButton className="ml-3 w-[106px]">다음 찾기<Key k="F" /></DialogButton>
          <DialogButton className="ml-6 w-[99px]">닫기</DialogButton>
        </div>
      </div>

      <div className="h-[171px] border border-[#82868f] bg-white">
        <table className="table-fixed text-left text-[18px]">
          <colgroup>
            <col className="w-[104px]" />
            <col className="w-[76px]" />
            <col className="w-[56px]" />
            <col className="w-[61px]" />
            <col className="w-[56px]" />
            <col className="w-[274px]" />
          </colgroup>
          <thead>
            <tr className="h-[34px]">
              {['통합 문서', '시트', '이름', '셀', '값', '수식'].map((t) => (
                <th key={t} className="border-r border-[#e5e5e5] p-0 pl-[7px] font-normal whitespace-nowrap">{t}</th>
              ))}
            </tr>
          </thead>
          <tbody>
            <tr className="h-[28px]">
              {['통합 문서3', 'Sheet2', '', '$B$9', '돼지', ''].map((t, i) => (
                <td key={i} className="p-0 pl-[7px] whitespace-nowrap">{t}</td>
              ))}
            </tr>
          </tbody>
        </table>
      </div>

      <div className="flex h-[25px] items-start justify-between pt-px pl-[2px]">
        <span>1 개의 셀을 찾았습니다.</span>
        <Svg w={12} h={12} className="mt-[11px] mr-px">
          <path d="M8 0h3v3H8zM4 4h3v3H4zM8 4h3v3H8zM0 8h3v3H0zM4 8h3v3H4zM8 8h3v3H8z" fill="#bdbdbd" />
        </Svg>
      </div>
    </div>
  );
}

function Watermark() {
  return (
    <div className="pointer-events-none absolute right-[58px] bottom-[46px] flex items-center gap-2 opacity-80">
      <Svg w={42} h={48}>
        <path d="M21 0 42 12 32 18 11 6z" fill="#8fd0c1" />
        <path d="M0 12 21 24v23L0 35z" fill="#5d9c8f" />
        <path d="M42 12v23L21 47V24z" fill="#6fb0a2" />
        <path d="M11 6 32 18v22l-11-8V24l4-2-14-8z" fill="#f4f8f7" />
        <path d="m21 28 10 6M21 32l10 6M21 36l10 6M21 40l8 5" stroke="#4f9084" strokeWidth="1.300" />
      </Svg>
      <span className="[font-family:Inter,sans-serif] text-[37px] leading-none font-bold text-[#6aae9f]">SOFTWAREIRE</span>
    </div>
  );
}

/* ---------- 앱 ---------- */

export default function App() {
  return (
    <div className="h-screen bg-[linear-gradient(135deg,#d63a44_8px,#15181a_8px)] [font-family:'Open_Sans','Noto_Sans_CJK_KR_DemiLight','Noto_Sans_CJK_KR',sans-serif]">
      <div className="relative flex h-full flex-col overflow-hidden rounded-[9px] border border-[#7d7d7d] bg-[#f0f0f0] text-[#222]">
        <header className="relative flex h-[61px] shrink-0 items-center pl-[19px]">
          <ExcelLogo />
          <span className="ml-[18px] text-[16px] whitespace-pre text-[#b4b4b4]">통합 문서3  -  Excel</span>
          <div className="absolute right-0 left-5 mx-auto flex h-[41px] w-[410px] items-center rounded-[5px] border border-[#cfcfcf] bg-[#f0f0f0] pl-[25px] shadow-sm">
            <Svg w={20} h={20}><circle cx="12.500" cy="7.500" r="6" stroke="#b4b4b4" strokeWidth="1.300" /><path d="M8 12 1 19" stroke="#b4b4b4" strokeWidth="1.300" /></Svg>
            <input aria-label="검색" placeholder="검색" className="ml-4 w-0 flex-1 bg-transparent text-[17px] outline-none placeholder:text-[#b4b4b4]" />
          </div>
          <div className="ml-auto flex items-center pr-[23px]">
            <button type="button" className="h-[23px] w-[67px] bg-[#bcbcbc] text-[16px] leading-[22px] text-[#f4f4f4]">로그인</button>
            <button type="button" aria-label="최소화" className="ml-[34px]"><Svg w={13} h={13}><path d="M0 6h13" stroke="#b8b8b8" strokeWidth="1.300" /></Svg></button>
            <button type="button" aria-label="최대화" className="ml-[46px]"><Svg w={14} h={14}><rect x="1" y="1" width="12" height="12" rx="1.500" stroke="#b8b8b8" strokeWidth="1.300" /></Svg></button>
            <button type="button" aria-label="닫기" className="ml-[46px]"><Svg w={14} h={14}><path d="m1 1 12 12M13 1 1 13" stroke="#b8b8b8" strokeWidth="1.300" /></Svg></button>
          </div>
        </header>

        <nav className="flex h-[37px] shrink-0 items-start gap-[25px] pt-[7px] pl-[21px] text-[18px] leading-6">
          {MENU_TABS.map((t) => (
            <button key={t} type="button" className={t === '홈' ? "h-[27px] border-b-[3px] border-[#107c41] font-medium [font-family:'Noto_Sans_CJK_KR',sans-serif]" : 'h-[27px] pb-[3px]'}>{t}</button>
          ))}
          <button type="button" className="-mt-1 mr-[15px] ml-auto flex h-[30px] w-[92px] items-center rounded-[5px] bg-[#107c41] pr-1 pl-[9px] text-white">
            <Svg w={16} h={16}><path d="M5 5H1v10h12v-4M4 11c0-4 2-6 6-6V2l5 4.500-5 4V8c-3 0-4.500 1-6 3z" stroke="#fff" strokeWidth="1.200" /></Svg>
            <span className="ml-[6px] flex-1 text-left">공유</span>
            <Chevron className="mr-1 text-white" />
          </button>
        </nav>

        <div className="mx-[10px] shrink-0">
          <Ribbon />
          <QuickAccess />
        </div>
        <FormulaBar />
        <Sheet />
        <SheetTabs />
        <StatusBar />
        <FindDialog />
        <Watermark />
      </div>
    </div>
  );
}
